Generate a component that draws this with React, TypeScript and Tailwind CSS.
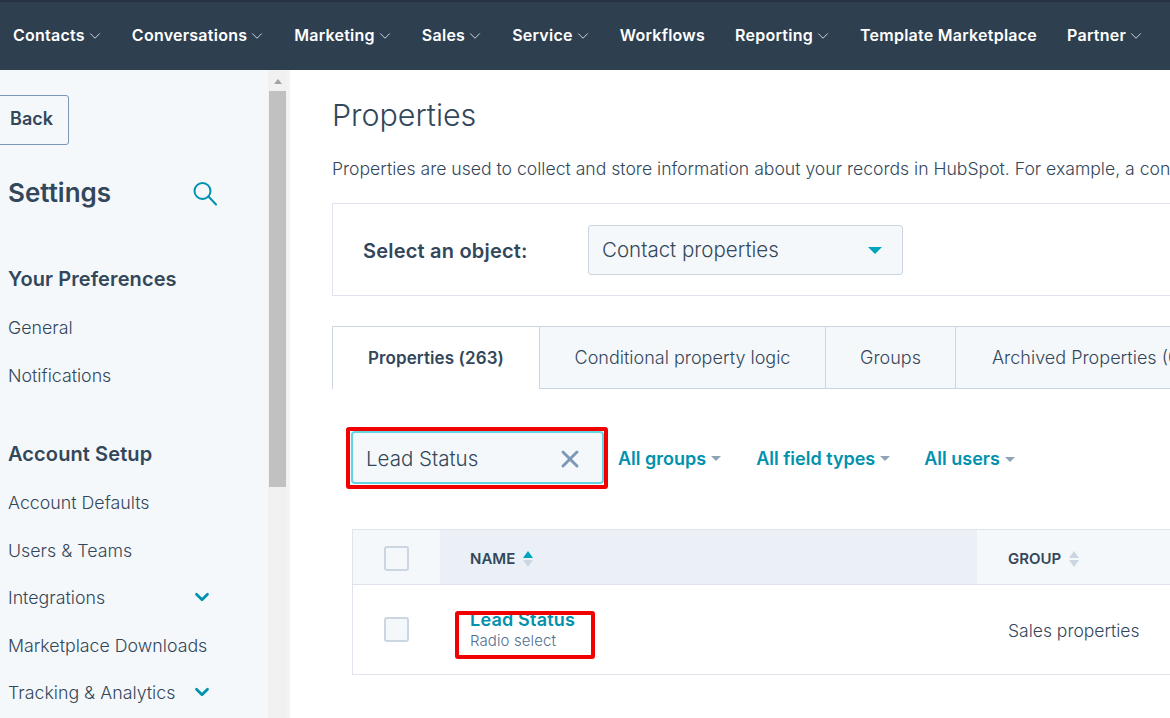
import { ChevronDown, X } from "lucide-react";

const navItems = [
  { label: "Contacts", caret: true },
  { label: "Conversations", caret: true },
  { label: "Marketing", caret: true },
  { label: "Sales", caret: true },
  { label: "Service", caret: true },
  { label: "Workflows", caret: false },
  { label: "Reporting", caret: true },
  { label: "Template Marketplace", caret: false },
  { label: "Partner", caret: true },
];

function SideLink({ label, caret }: { label: string; caret?: boolean }) {
  return (
    <div className="flex h-[47.5px] items-center justify-between pr-[56px] text-[17.8px] font-light text-[#33475b]">
      <span>{label}</span>
      {caret && <ChevronDown size={22} strokeWidth={3} className="-mt-1 -mr-[1px] text-[#0091ae]" />}
    </div>
  );
}

function Caret() {
  return <span className="ml-[5px] mt-[1px] h-0 w-0 border-x-[5px] border-t-[5px] border-x-transparent border-t-[#8fa3b7]" />;
}

function Filter({ label, className }: { label: string; className: string }) {
  return (
    <div className={`flex items-center text-[18px] font-semibold text-[#0091ae] ${className}`}>
      {label}
      <Caret />
    </div>
  );
}

function SortArrows({ active }: { active?: boolean }) {
  return (
    <span className="-mt-[2px] ml-[8px] flex flex-col gap-[2px]">
      <span className={`h-0 w-0 border-x-[5px] border-b-[7px] border-x-transparent ${active ? "border-b-[#00a4bd]" : "border-b-[#cbd6e2]"}`} />
      <span className="h-0 w-0 border-x-[5px] border-t-[7px] border-x-transparent border-t-[#cbd6e2]" />
    </span>
  );
}

function Checkbox() {
  return <div className="h-[25px] w-[25px] rounded-[3px] border-2 border-[#cbd6e2] bg-[#f5f8fa]" />;
}

export default function App() {
  return (
    <div
      className="relative flex h-[718px] w-[1170px] flex-col overflow-hidden bg-white text-[#33475b]"
      style={{ fontFamily: "Inter, 'Noto Sans', sans-serif" }}
    >
      {/* Top nav */}
      <nav className="flex h-[70px] shrink-0 items-center gap-[30px] border-t-2 border-[#253342] bg-[#2e3f50] pl-[13px] pb-[3px]">
        {navItems.map((item) => (
          <div key={item.label} className="flex shrink-0 items-center whitespace-nowrap text-[16px] font-semibold tracking-[0.25px] text-white">
            {item.label}
            {item.caret && <ChevronDown size={18} strokeWidth={1.2} className="-mr-[2px] ml-[1px] mt-[2px] text-[#dfe3eb]" />}
          </div>
        ))}
      </nav>

      <div className="flex min-h-0 flex-1">
        {/* Sidebar */}
        <aside className="w-[268px] shrink-0 overflow-hidden bg-[#f5f8fa] pl-[8px]">
          <div className="mt-[25px] -ml-[12px] flex h-[50px] w-[73px] items-center justify-end rounded-[3px] border border-[#7c98b6] pb-[3px] pr-[15px] text-[18px] font-semibold">
            Back
          </div>
          <div className="mt-[27px] flex h-[40px] items-center justify-between pr-[51px]">
            <span className="text-[26px] font-semibold">Settings</span>
            <svg width="24" height="24" viewBox="0 0 24 24" fill="none" stroke="#0091ae" strokeWidth="2" className="mt-[3px]">
              <circle cx="9.5" cy="9" r="8" />
              <path d="M15.5 14.5 L23 22.5" strokeLinecap="round" />
            </svg>
          </div>
          <div className="mt-[53px] text-[20px] font-semibold leading-[28px] tracking-[0.1px]">Your Preferences</div>
          <div className="mt-[12px]">
            <SideLink label="General" />
            <SideLink label="Notifications" />
          </div>
          <div className="mt-[40px] text-[20px] font-semibold leading-[28px] tracking-[0.1px]">Account Setup</div>
          <div className="mt-[12px]">
            <SideLink label="Account Defaults" />
            <SideLink label="Users &amp; Teams" />
            <SideLink label="Integrations" caret />
            <SideLink label="Marketplace Downloads" />
            <SideLink label="Tracking &amp; Analytics" caret />
          </div>
        </aside>

        {/* Scrollbar */}
        <div className="flex w-[19px] shrink-0 flex-col items-center bg-[#f1f1f1]">
          <span className="mt-[9px] h-0 w-0 border-x-[4px] border-b-[5px] border-x-transparent border-b-[#a3a3a3]" />
          <div className="mt-[7px] h-[396px] w-[17px] bg-[#c1c1c1]" />
        </div>
        <div className="w-[3px] shrink-0 bg-[#f3f4f5]" />

        {/* Main */}
        <main className="min-w-0 flex-1 overflow-hidden pl-[42px]">
          <h1 className="mt-[25px] text-[30.4px] font-light leading-[40px]">Properties</h1>
          <p className="mt-[24px] whitespace-nowrap text-[17.6px] font-light leading-[20px]">
            Properties are used to collect and store information about your records in HubSpot. For example, a contact
          </p>

          <div className="mt-[24px] flex h-[93px] w-[900px] items-center border border-[#dfe3eb] pl-[30px]">
            <span className="mt-[2px] w-[225px] text-[20px] font-semibold tracking-[0.2px]">Select an object:</span>
            <div className="flex h-[50px] w-[315px] items-center justify-between rounded-[3px] border border-[#cbd6e2] bg-[#f5f8fa] pl-[13px] pr-[20px] pt-[1px] text-[20.5px] font-light">
              Contact properties
              <span className="h-0 w-0 border-x-[7px] border-t-[7px] border-x-transparent border-t-[#00a4bd]" />
            </div>
          </div>

          {/* Tabs */}
          <div className="mt-[30px] flex h-[63px] w-[900px] border-b border-[#cbd6e2] pt-[1px] text-[18px] shadow-[inset_0_1px_0_#cbd6e2]">
            <div className="-mb-px flex w-[208px] items-center justify-center border-x border-[#cbd6e2] bg-white pt-[1px] text-[17px] font-semibold tracking-[0.1px]">
              Properties (263)
            </div>
            <div className="flex w-[286px] items-center justify-center border-r border-[#cbd6e2] bg-[#f5f8fa] font-light">
              Conditional property logic
            </div>
            <div className="flex w-[130px] items-center justify-center border-r border-[#cbd6e2] bg-[#f5f8fa] font-light">
              Groups
            </div>
            <div className="flex flex-1 items-center whitespace-nowrap bg-[#f5f8fa] pl-[36px] font-light">
              Archived Properties (0)
            </div>
          </div>

          {/* Filters */}
          <div className="mt-[42px] flex h-[53px] items-center pl-[19px]">
            <div className="flex h-[53px] w-[253px] shrink-0 items-center justify-between rounded-[4px] border-2 border-[#62d4e4] bg-[#f5f8fa] pl-[13px] pr-[18px] pt-[3px] text-[20.5px] font-light">
              Lead Status
              <X size={28} strokeWidth={2.5} className="-mt-[1px] text-[#7c98b6]" />
            </div>
            <Filter label="All groups" className="ml-[14px] mt-[1px]" />
            <Filter label="All field types" className="ml-[35px] mt-[1px]" />
            <Filter label="All users" className="ml-[34px] mt-[2px]" />
          </div>

          {/* Table */}
          <div className="mt-[45px] ml-[20px] w-[900px] border border-[#dfe3eb]">
            <div className="flex h-[55px] border-b border-[#dfe3eb] bg-[#f5f8fa]">
              <div className="flex w-[87px] items-center justify-center pt-[3px]">
                <Checkbox />
              </div>
              <div className="flex w-[537px] items-center bg-[#eaf0f6] pl-[30px] pt-[5px] text-[15px] font-semibold">
                NAME
                <SortArrows active />
              </div>
              <div className="flex items-center pl-[31px] pt-[5px] text-[15px] font-semibold">
                GROUP
                <SortArrows />
              </div>
            </div>
            <div className="flex h-[89px]">
              <div className="flex w-[87px] items-center justify-center pb-[1px]">
                <Checkbox />
              </div>
              <div className="flex w-[537px] flex-col justify-center pl-[30px] pt-[2px]">
                <span className="text-[18px] font-semibold leading-[20px] tracking-[0.2px] text-[#0091ae]">Lead Status</span>
                <span className="mt-[1px] text-[15px] font-light leading-[20px] tracking-[0.1px] text-[#516f90]">Radio select</span>
              </div>
              <div className="flex items-center pl-[31px] pt-[3px] text-[17.5px] font-light">Sales properties</div>
            </div>
          </div>
        </main>
      </div>

      {/* Red annotation boxes */}
      <div className="absolute left-[346px] top-[427px] h-[62px] w-[262px] rounded-[3px] border-[4px] border-[#f00000]" />
      <div className="absolute left-[455px] top-[611px] h-[48px] w-[140px] rounded-[3px] border-[4px] border-[#f00000]" />
    </div>
  );
}
